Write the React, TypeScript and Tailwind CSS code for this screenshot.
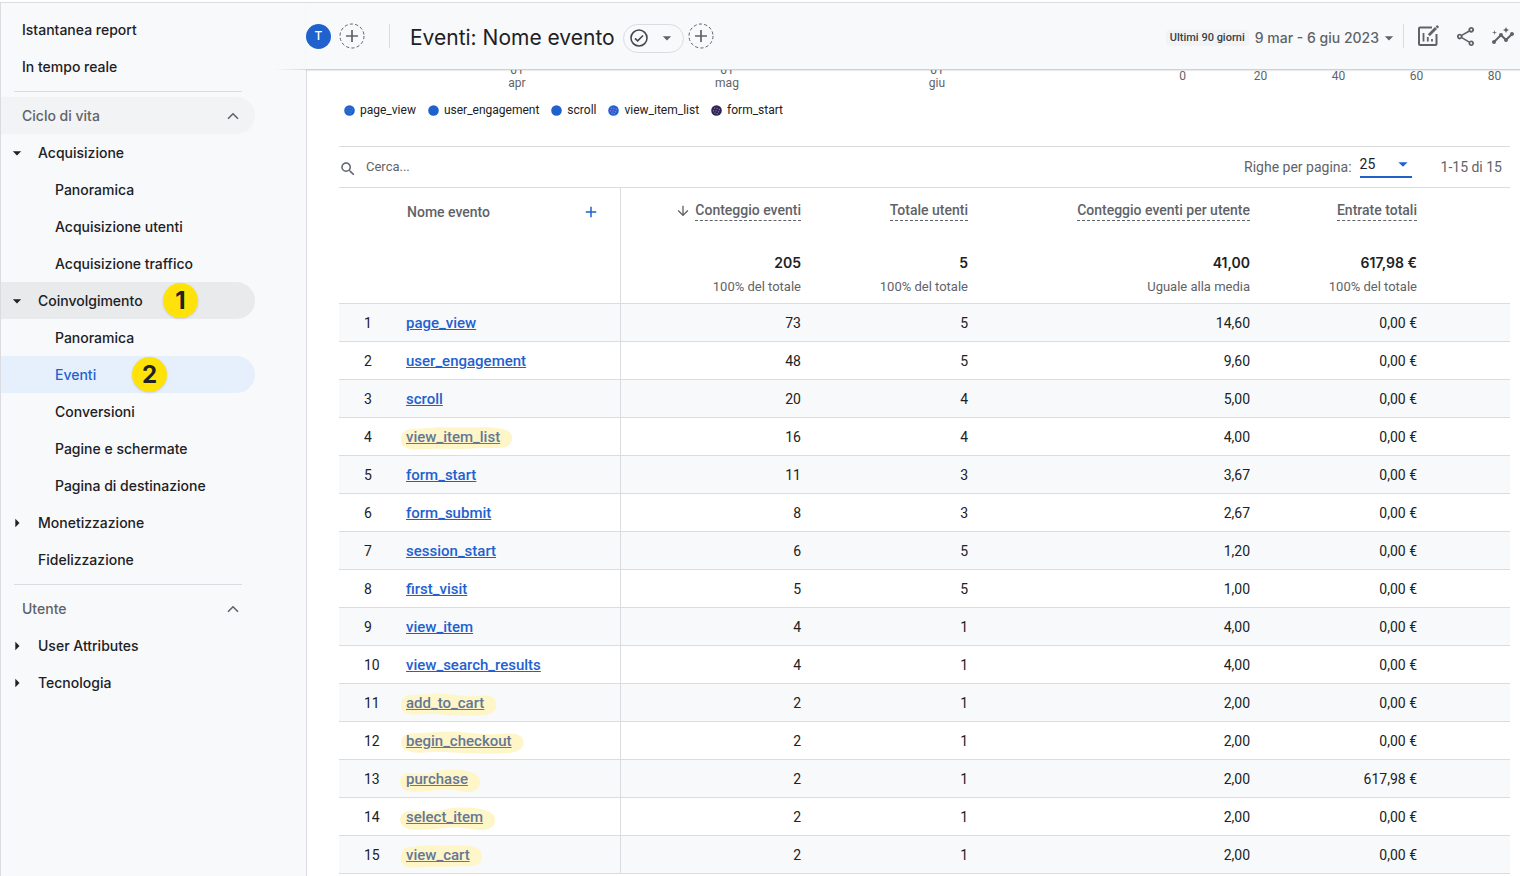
import { Fragment } from 'react';
import { MdArrowDropDown, MdArrowRight, MdSearch, MdInsights, MdOutlineShare, MdArrowDownward, MdAdd } from 'react-icons/md';
import clsx from 'clsx';

type NavItem = {
    label: string;
    level: 0 | 1 | 2;
    arrow?: 'down' | 'right';
    section?: boolean;
    state?: 'hover' | 'open' | 'active';
    badge?: string;
    divider?: boolean;
};

const NAV: NavItem[] = [
    { label: 'Istantanea report', level: 0 },
    { label: 'In tempo reale', level: 0 },
    { label: 'Ciclo di vita', level: 0, section: true, state: 'hover', divider: true },
    { label: 'Acquisizione', level: 1, arrow: 'down' },
    { label: 'Panoramica', level: 2 },
    { label: 'Acquisizione utenti', level: 2 },
    { label: 'Acquisizione traffico', level: 2 },
    { label: 'Coinvolgimento', level: 1, arrow: 'down', state: 'open', badge: '1' },
    { label: 'Panoramica', level: 2 },
    { label: 'Eventi', level: 2, state: 'active', badge: '2' },
    { label: 'Conversioni', level: 2 },
    { label: 'Pagine e schermate', level: 2 },
    { label: 'Pagina di destinazione', level: 2 },
    { label: 'Monetizzazione', level: 1, arrow: 'right' },
    { label: 'Fidelizzazione', level: 1 },
    { label: 'Utente', level: 0, section: true, divider: true },
    { label: 'User Attributes', level: 1, arrow: 'right' },
    { label: 'Tecnologia', level: 1, arrow: 'right' },
];

const LEGEND = [
    { name: 'page_view', dots: '#4a7fc0' },
    { name: 'user_engagement', dots: '#1f62ce' },
    { name: 'scroll', dots: '#1f62ce' },
    { name: 'view_item_list', dots: '#b070e0' },
    { name: 'form_start', base: '#2b2356', dots: '#9a7aa4' },
];

const METRICS = [
    { title: 'Conteggio eventi', total: '205', note: '100% del totale', sorted: true },
    { title: 'Totale utenti', total: '5', note: '100% del totale' },
    { title: 'Conteggio eventi per utente', total: '41,00', note: 'Uguale alla media' },
    { title: 'Entrate totali', total: '617,98 €', note: '100% del totale' },
];

// marker strokes drawn behind the highlighted event names
const FLAT = 'M2 8C4 2 12 3 20 2.5S35 1 46 1.5 70 .5 82 1.5 100 5 100 12s-5 10-12 10-14-.5-24 .5-24 0-36 .5-16 1.500-22-1S0 14 2 8Z';
const WAVY = 'M1 12C1 6 5 3 13 3S30 2 38 1.500 56 3 68 4s14-1 22-.500S100 8 100 13s-4 9-12 10-20 1-30 .500-18-2-30-1.500-14 1.500-20-.500S1 18 1 12Z';
const RISING = 'M0 13C1 7 6 4 14 5S28 7 38 5 56 1 70 1.500 99 5 100 12s-4 12-14 12-18-3-30-2.500S30 24 18 24 0 20 0 13Z';

const ROWS = [
    { name: 'page_view', v: ['73', '5', '14,60', '0,00 €'] },
    { name: 'user_engagement', v: ['48', '5', '9,60', '0,00 €'] },
    { name: 'scroll', v: ['20', '4', '5,00', '0,00 €'] },
    { name: 'view_item_list', v: ['16', '4', '4,00', '0,00 €'], mark: FLAT },
    { name: 'form_start', v: ['11', '3', '3,67', '0,00 €'] },
    { name: 'form_submit', v: ['8', '3', '2,67', '0,00 €'] },
    { name: 'session_start', v: ['6', '5', '1,20', '0,00 €'] },
    { name: 'first_visit', v: ['5', '5', '1,00', '0,00 €'] },
    { name: 'view_item', v: ['4', '1', '4,00', '0,00 €'] },
    { name: 'view_search_results', v: ['4', '1', '4,00', '0,00 €'] },
    { name: 'add_to_cart', v: ['2', '1', '2,00', '0,00 €'], mark: WAVY },
    { name: 'begin_checkout', v: ['2', '1', '2,00', '0,00 €'], mark: WAVY },
    { name: 'purchase', v: ['2', '1', '2,00', '617,98 €'], mark: RISING },
    { name: 'select_item', v: ['2', '1', '2,00', '0,00 €'], mark: RISING },
    { name: 'view_cart', v: ['2', '1', '2,00', '0,00 €'], mark: FLAT },
];

const Chevron = () => (
    <svg viewBox="0 0 12 8" className="w-3 h-2" fill="none" stroke="#5f6368" strokeWidth="1.6">
        <path d="M1 6.8 6 1.8l5 5" />
    </svg>
);

const Sidebar = () => (
    <nav className="w-[305px] shrink-0 pt-2 text-sm font-medium text-[#202124]">
        {NAV.map((item, index) => (
            <Fragment key={index}>
                {item.divider && <hr className="mt-1.5 mb-[5px] ml-[13px] w-[228px] border-[#dadce0]" />}
                <a
                    href="#"
                    className={clsx(
                        'relative flex items-center h-[37px] w-[254px] rounded-r-full',
                        item.level === 0 && 'pl-[21px]',
                        item.level === 1 && 'pl-[37px]',
                        item.level === 2 && 'pl-[54px]',
                        item.section && 'justify-between pr-4 text-[#5f6368]',
                        item.state === 'hover' && 'bg-[#f1f3f4]',
                        item.state === 'open' && 'bg-[#e8eaeb]',
                        item.state === 'active' && 'bg-[#e6effc] text-[#1f62ce]'
                    )}
                >
                    {item.arrow === 'down' && <MdArrowDropDown className="absolute left-1.5 w-5 h-5" />}
                    {item.arrow === 'right' && <MdArrowRight className="absolute left-1.5 w-5 h-5" />}
                    {item.label}
                    {item.section && <Chevron />}
                    {item.badge && (
                        <span
                            className={clsx(
                                'absolute flex items-center justify-center w-[35px] h-[35px] rounded-full bg-[#ffe20a] text-2xl font-bold text-[#222] shadow-sm',
                                item.badge === '1' ? 'left-[162px]' : 'left-[131px]'
                            )}
                        >
                            {item.badge}
                        </span>
                    )}
                </a>
            </Fragment>
        ))}
    </nav>
);

const DashedPlus = ({ label }: { label: string }) => (
    <button aria-label={label} className="shrink-0">
        <svg viewBox="0 0 26 26" className="w-[26px] h-[26px]" fill="none" stroke="#5f6368">
            <circle cx="13" cy="13" r="12" strokeWidth="1" strokeDasharray="3.2 2.2" />
            <path d="M13 7v12M7 13h12" strokeWidth="1.7" />
        </svg>
    </button>
);

const Header = () => (
    <header className="relative z-10 flex items-center h-[67px] pr-1 bg-[#f8f9fb] border-b border-[#cfd1d4] shadow-[0_1px_1px_rgba(0,0,0,0.08)]">
        <div className="absolute right-full -bottom-px w-8 h-px bg-linear-to-l from-[#d8dadd] to-transparent" />
        <div className="flex items-center gap-2">
            <span className="flex items-center justify-center w-[25px] h-[25px] rounded-full bg-[#1f62ce] text-xs font-medium text-white">T</span>
            <DashedPlus label="Aggiungi confronto" />
        </div>
        <div className="ml-6 h-6 w-px bg-[#dadce0]" />
        <h1 className="ml-5 mt-1 text-[21px] leading-8 text-[#202124] whitespace-nowrap">Eventi: Nome evento</h1>
        <button aria-label="Stato del report" className="ml-2 mt-1 flex items-center justify-between w-[61px] h-[29px] rounded-full border border-[#dadce0] pl-[5px] pr-1.5 text-[#5f6368]">
            <svg viewBox="0 0 20 20" className="w-5 h-5" fill="none" stroke="#44474a" strokeWidth="1.6">
                <circle cx="10" cy="10" r="8" />
                <path d="m6 10.3 2.7 2.6 5.3-5.4" />
            </svg>
            <MdArrowDropDown className="w-5 h-5" />
        </button>
        <div className="ml-1 flex">
            <DashedPlus label="Aggiungi filtro" />
        </div>
        <button className="ml-auto mt-1 flex items-center text-sm font-medium text-[#5f6368] whitespace-nowrap">
            <span className="mr-1.5 px-1 py-px rounded-sm bg-[#f1f3f4] font-[Roboto] text-[11px] leading-[14px] font-medium text-[#3c4043]">Ultimi 90 giorni</span>
            9 mar - 6 giu 2023
            <MdArrowDropDown className="w-5 h-5" />
        </button>
        <div className="ml-1 h-6 w-px bg-[#dadce0]" />
        <div className="ml-3 mr-px flex items-center gap-[14px] text-[#5f6368]">
            <button aria-label="Personalizza report">
                <svg viewBox="0 0 24 24" className="w-6 h-6" fill="none" stroke="currentColor" strokeWidth="2">
                    <path d="M16 3.500H4a1 1 0 0 0-1 1v15.500a1 1 0 0 0 1 1h15.500a1 1 0 0 0 1-1V10" />
                    <path d="M7.500 9v8.500M11.800 13v4.500M16 15v2.500" strokeWidth="1.800" />
                    <path d="m12.800 11.200 7.200-7.200" strokeWidth="2.800" />
                    <path d="m20.600 3.400 1.500-1.500" strokeWidth="2.800" />
                </svg>
            </button>
            <button aria-label="Condividi"><MdOutlineShare className="w-[23px] h-[23px]" /></button>
            <button aria-label="Approfondimenti"><MdInsights className="w-6 h-6" /></button>
        </div>
    </header>
);

const ChartFooter = () => (
    <div className="h-[76px] overflow-hidden text-xs text-[#5f6368]">
        <div className="flex justify-between -mt-[6px] leading-[13px]">
            <div className="flex w-[612px] justify-between pl-[164px]">
                {['apr', 'mag', 'giu'].map((month) => (
                    <span key={month} className="w-7 text-center">01<br />{month}</span>
                ))}
            </div>
            <div className="flex w-[343px] justify-between pt-[6px]">
                {['0', '20', '40', '60', '80'].map((tick) => (
                    <span key={tick} className="w-[31px] text-center">{tick}</span>
                ))}
            </div>
        </div>
        <ul className="mt-3 flex gap-3 pl-[5px] leading-4 text-[#202124]">
            {LEGEND.map((entry) => (
                <li key={entry.name} className="flex items-center gap-[5px]">
                    <svg viewBox="0 0 11 11" className="w-[11px] h-[11px]">
                        <circle cx="5.5" cy="5.5" r="5.3" fill={entry.base ?? '#1f62ce'} />
                        <g fill={entry.dots}>
                            <circle cx="3.500" cy="3.200" r=".7" /><circle cx="6" cy="3.200" r=".7" /><circle cx="8.300" cy="4.500" r=".7" />
                            <circle cx="2.500" cy="5.700" r=".7" /><circle cx="5" cy="5.700" r=".7" /><circle cx="7.500" cy="6.700" r=".7" />
                            <circle cx="4" cy="8" r=".7" /><circle cx="6.300" cy="8.700" r=".7" />
                        </g>
                    </svg>
                    {entry.name}
                </li>
            ))}
        </ul>
    </div>
);

const Toolbar = () => (
    <div className="flex items-center justify-between h-[41px] border-t border-[#dadce0] text-sm text-[#5f6368]">
        <label className="flex items-center">
            <MdSearch className="w-[18px] h-[18px] mt-1" />
            <input type="text" placeholder="Cerca..." aria-label="Cerca" className="ml-[9px] w-60 text-[13px] outline-none placeholder:text-[#5f6368]" />
        </label>
        <div className="flex items-center pr-2">
            <label htmlFor="rows">Righe per pagina:</label>
            <div className="relative ml-2 mr-[29px] mb-1">
                <select id="rows" defaultValue="25" className="block appearance-none w-[52px] h-[26px] border-b-2 border-[#1f62ce] text-sm text-[#202124]">
                    <option>10</option>
                    <option>25</option>
                    <option>50</option>
                </select>
                <MdArrowDropDown className="pointer-events-none absolute -right-0.5 top-px w-[22px] h-[22px] text-[#1f62ce]" />
            </div>
            1-15 di 15
        </div>
    </div>
);

const Highlight = ({ path }: { path: string }) => (
    <svg viewBox="0 0 100 24" preserveAspectRatio="none" className="absolute -left-1.5 -top-px -z-10 w-[calc(100%+18px)] h-6" fill="#fef6c8">
        <path d={path} />
    </svg>
);

const EventsTable = () => (
    <table className="w-full table-fixed border-collapse text-sm text-[#202124]">
        <colgroup>
            <col className="w-[56px]" />
            <col className="w-[225px]" />
            <col className="w-[197px]" />
            <col className="w-[167px]" />
            <col />
            <col className="w-[167px]" />
            <col className="w-[77px]" />
        </colgroup>
        <thead>
            <tr className="h-[116px] border-y border-[#dadce0] align-top text-[#5f6368]">
                <th />
                <th className="pt-[14px] pl-3 pr-5 text-left font-medium border-r border-[#dadce0]">
                    <div className="flex items-center justify-between">
                        Nome evento
                        <button aria-label="Aggiungi dimensione" className="text-[#1f62ce]"><MdAdd className="w-[18px] h-[18px]" /></button>
                    </div>
                </th>
                {METRICS.map((metric) => (
                    <th key={metric.title} className="pt-3 pr-4 text-right font-normal whitespace-nowrap">
                        <div className="flex justify-end items-center gap-1">
                            {metric.sorted && <MdArrowDownward className="w-4 h-4" />}
                            <span className="border-b border-dashed border-[#5f6368] font-medium">{metric.title}</span>
                        </div>
                        <div className="mt-8 font-[Inter] text-sm font-semibold text-[#202124]">{metric.total}</div>
                        <div className="mt-1 text-[13px] leading-5">{metric.note}</div>
                    </th>
                ))}
                <th />
            </tr>
        </thead>
        <tbody>
            {ROWS.map((row, index) => (
                <tr key={row.name} className="h-[38px] border-b border-[#dadce0] odd:bg-[#f8f9fb]">
                    <td className="pl-[25px]">{index + 1}</td>
                    <td className="pl-[11px] border-r border-[#dadce0]">
                        <span className="relative isolate inline-block">
                            {row.mark && <Highlight path={row.mark} />}
                            <a href="#" className={clsx('text-[15px] leading-5 font-medium underline', row.mark ? 'text-[#667796]' : 'text-[#1f62ce]')}>{row.name}</a>
                        </span>
                    </td>
                    {row.v.map((value, i) => (
                        <td key={i} className="pr-4 text-right">{value}</td>
                    ))}
                    <td />
                </tr>
            ))}
        </tbody>
    </table>
);

export default function App() {
    return (
        <div className="min-h-screen pt-0.5 bg-white overflow-x-hidden">
            <div className="flex border-t border-l border-[#dadce0] bg-[#f8f9fb] font-[Inter,sans-serif]">
                <Sidebar />
                <div className="flex-1 min-w-0 flex flex-col">
                    <Header />
                    <main className="flex-1 pl-8 pr-[10px] pb-1 border-l border-[#dadce0] bg-white font-[Roboto,sans-serif]">
                        <ChartFooter />
                        <Toolbar />
                        <EventsTable />
                    </main>
                </div>
            </div>
        </div>
    );
}
